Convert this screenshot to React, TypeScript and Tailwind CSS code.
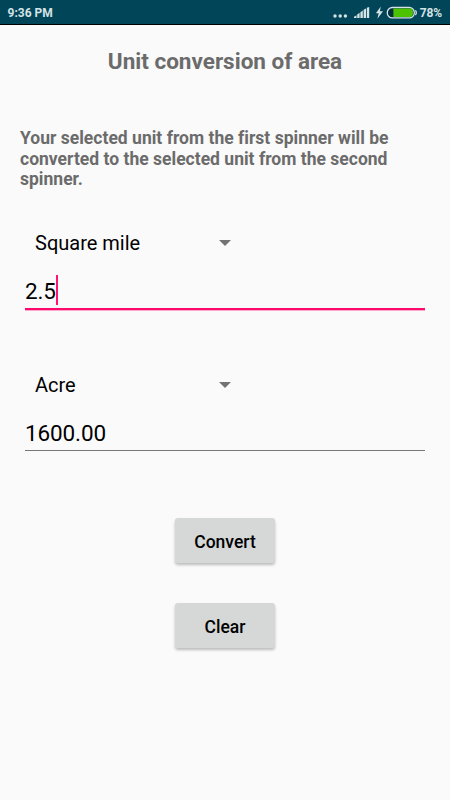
import type { ReactNode } from "react";

function StatusBar() {
  return (
    <header className="flex h-6 items-center justify-between bg-[#004658] pl-[7.5px] pr-[8px] text-[12px] font-medium leading-6 text-[#d5e2e6] shadow-[0_1px_0_#000]">
      <span className="pt-[2px] font-bold">9:36 PM</span>

      <div className="flex items-center">
        {/* dots, signal, bolt and battery */}
        <svg width="90" height="24" viewBox="0 0 90 24" className="mr-[2px] block">
          <g fill="#d5e2e6">
            <circle cx="7" cy="16" r="1.7" />
            <circle cx="12.2" cy="16" r="1.7" />
            <circle cx="17.4" cy="16" r="1.7" />
            <path d="M26 18v-1.2l2.5-1.6V18zM29.2 18v-3.4l2.4-1.8V18zM32.4 18v-5.8l2.4-1.8V18zM35.6 18V9.8L38 8.4V18zM38.8 18V7.8l2.4-.8V18z" />
            <path d="M52.8 6.5l-4.9 6.8h2.8l-1.3 5.4 5.6-7.4h-3.2z" />
          </g>
          <rect x="59.3" y="7.5" width="27" height="10.4" rx="5" fill="#003040" stroke="#d5e2e6" strokeWidth="1.3" />
          <path d="M65.4 8.5h17a3.4 3.4 0 0 1 2.6 3.2v2a3.4 3.4 0 0 1-2.6 3.2h-17z" fill="#4dc200" />
          <path d="M87.4 10.4q1.8 2.3 0 4.6" fill="none" stroke="#d5e2e6" strokeWidth="1.3" />
        </svg>
        <span className="pt-[2px] font-bold tracking-[-0.15px]">78%</span>
      </div>
    </header>
  );
}

function Spinner({ label }: { label: string }) {
  return (
    <button className="flex h-[30px] w-[205px] items-center justify-between pl-[15px] text-left text-[20px] leading-[30px] text-black">
      <span>{label}</span>
      <svg width="12" height="6" viewBox="0 0 12 6" className="mr-[-6px]">
        <path d="M0 0h12L6 6z" fill="#737373" />
      </svg>
    </button>
  );
}

function Field({ value, focused = false }: { value: string; focused?: boolean }) {
  return (
    <div
      className={[
        "mx-[5px] flex items-start text-[22.5px] leading-[32px] tracking-[-0.12px] text-black",
        focused
          ? "h-[35px] border-b-2 border-[#ff0a6c] shadow-[0_1px_0_rgba(255,10,108,0.35)]"
          : "h-[34px] border-b border-[#777777]",
      ].join(" ")}
    >
      <span>{value}</span>
      {focused && <span className="h-[30px] w-[2px] bg-[#ff1472]" />}
    </div>
  );
}

function ActionButton({ children }: { children: ReactNode }) {
  return (
    <button className="h-[45px] w-[100px] rounded-[3px] bg-[#d6d7d7] pt-[5px] text-[17.5px] font-medium text-black shadow-[0_2px_3px_rgba(0,0,0,0.25)]">
      {children}
    </button>
  );
}

export default function App() {
  return (
    <div className="flex h-[800px] w-[450px] flex-col overflow-hidden bg-[#fafafa] font-['Roboto',sans-serif]">
      <StatusBar />

      <main className="flex flex-col px-5">
        <h1 className="mt-[22px] text-center text-[22.5px] font-bold leading-[30px] text-[#6b6b6b]">
          Unit conversion of area
        </h1>

        <p className="mt-[52px] text-[17.5px] font-bold leading-[20.5px] tracking-[0.01px] text-[#6b6b6b]">
          Your selected unit from the first spinner will be
          <br />
          converted to the selected unit from the second
          <br />
          spinner.
        </p>

        {/* From */}
        <section className="mt-[38px]">
          <Spinner label="Square mile" />
          <div className="mt-[17px]">
            <Field value="2.5" focused />
          </div>
        </section>

        {/* To */}
        <section className="mt-[60px]">
          <Spinner label="Acre" />
          <div className="mt-[17px]">
            <Field value="1600.00" />
          </div>
        </section>

        <div className="mt-[67px] flex flex-col items-center gap-10">
          <ActionButton>Convert</ActionButton>
          <ActionButton>Clear</ActionButton>
        </div>
      </main>
    </div>
  );
}
